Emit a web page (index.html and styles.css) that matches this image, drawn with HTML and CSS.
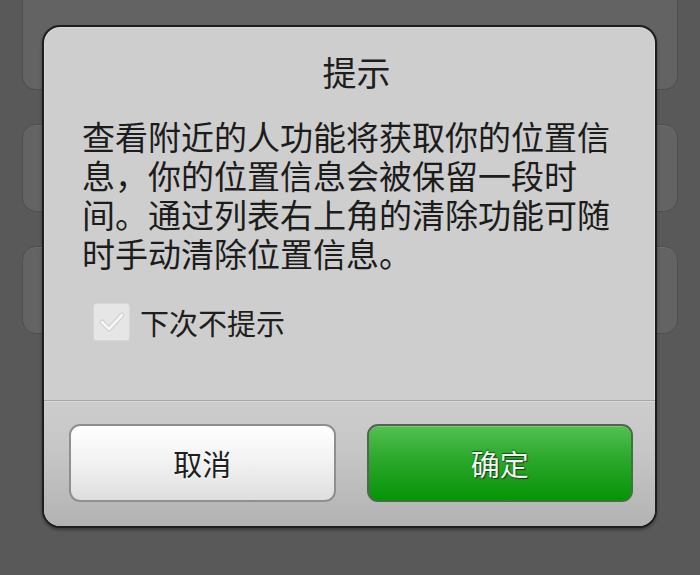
FILE: index.html
```html
<!DOCTYPE html>
<html lang="zh-CN">
<head>
<meta charset="utf-8">
<title>提示</title>
<link rel="stylesheet" href="styles.css">
</head>
<body>
<div class="screen">
  <div class="list">
    <div class="card card-first"></div>
    <div class="card"></div>
    <div class="card"></div>
  </div>
  <div class="dialog">
    <div class="dialog-title">提示</div>
    <div class="dialog-message">查看附近的人功能将获取你的位置信<br>息，你的位置信息会被保留一段时<br>间。通过列表右上角的清除功能可随<br>时手动清除位置信息。</div>
    <label class="check-row">
      <span class="checkbox">
        <svg width="37" height="38" viewBox="0 0 37 38">
          <polyline points="9,19 16,26 29,12" fill="none" stroke="#cfcfcf" stroke-width="5" stroke-linecap="round" stroke-linejoin="round"/>
          <polyline points="9,19 16,26 29,12" fill="none" stroke="#f6f6f6" stroke-width="2.6" stroke-linecap="round" stroke-linejoin="round"/>
        </svg>
      </span>
      <span class="check-label">下次不提示</span>
    </label>
    <div class="dialog-footer">
      <button class="btn btn-cancel">取消</button>
      <button class="btn btn-ok">确定</button>
    </div>
  </div>
</div>
</body>
</html>
```

FILE: styles.css
```css
html, body {
  margin: 0;
  padding: 0;
}
body {
  background: #595959;
  font-family: "Noto Sans CJK SC", "Noto Sans", sans-serif;
}
.screen {
  position: relative;
  width: 700px;
  height: 575px;
  overflow: hidden;
  background: #595959;
}
.list {
  display: flex;
  flex-direction: column;
  gap: 34px;
  padding: 0 22px;
  margin-top: -12px;
}
.card {
  height: 86px;
  border: 1px solid #4f4f4f;
  border-radius: 14px;
  background: #636363;
  box-shadow: inset 0 1px 0 #6c6c6c;
}
.card-first {
  height: 100px;
  border-top-color: #6a6a6a;
}
.dialog {
  position: absolute;
  left: 42px;
  top: 25px;
  width: 611px;
  height: 499px;
  border: 2px solid #1e1e1e;
  border-radius: 18px;
  background: #cecece;
  box-shadow: inset 0 0 0 1px #d9d9d9, 0 2px 3px rgba(0,0,0,0.35);
  display: flex;
  flex-direction: column;
  overflow: hidden;
}
.dialog-title {
  padding: 22px 0 0 14px;
  height: 68px;
  line-height: 46px;
  text-align: center;
  font-size: 34px;
  color: #1e1e1e;
}
.dialog-message {
  padding: 0 30px 0 38px;
  font-size: 33px;
  line-height: 39px;
  color: #1c1c1c;
}
.check-row {
  display: flex;
  align-items: center;
  gap: 10px;
  margin: 30px 0 0 49px;
  height: 38px;
}
.checkbox {
  width: 37px;
  height: 38px;
  background: #e6e6e6;
  border: 1px solid #d6d6d6;
  border-radius: 3px;
  box-sizing: border-box;
  display: flex;
}
.checkbox svg {
  margin: -1px;
}
.check-label {
  font-size: 29px;
  color: #1e1e1e;
}
.dialog-footer {
  margin-top: auto;
  height: 126px;
  box-sizing: border-box;
  border-top: 1px solid #a6a6a6;
  background: linear-gradient(#cdcdcd, #c6c6c6 40%, #b3b3b3);
  box-shadow: inset 0 1px 0 #dadada;
  display: flex;
  gap: 31px;
  padding: 23px 22px 23px 25px;
}
.btn {
  flex: 1;
  height: 78px;
  border-radius: 11px;
  font-family: "Noto Sans CJK SC", "Noto Sans", sans-serif;
  font-size: 29px;
  padding: 0;
  margin: 0;
}
.btn-cancel {
  border: 2px solid #8f8f8f;
  background: linear-gradient(#ffffff, #f3f3f3 45%, #dedede);
  color: #1e1e1e;
  text-shadow: 0 1px 0 #ffffff;
  box-shadow: inset 0 1px 0 #ffffff;
}
.btn-ok {
  border: 2px solid #4a6a4a;
  background: linear-gradient(#52c052, #2ba82b 45%, #079407);
  color: #f2f2f2;
  text-shadow: 0 -1px 1px #145214, 1px 1px 1px #0c3d0c;
  box-shadow: inset 0 1px 0 #6fd06f;
}
```
